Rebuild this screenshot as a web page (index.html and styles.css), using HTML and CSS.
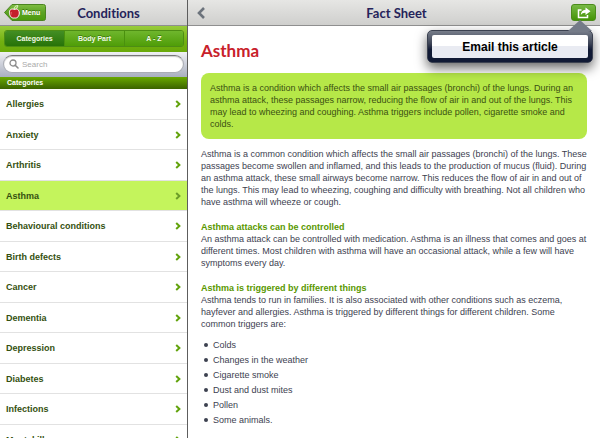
FILE: index.html
```html
<!DOCTYPE html>
<html lang="en">
<head>
    <meta charset="UTF-8">
    <meta name="viewport" content="width=device-width, initial-scale=1.0">
    <title>Conditions</title>
    <link rel="stylesheet" href="styles.css">
</head>
<body>

    <!-- Left column -->
    <aside class="sidebar">
        <header class="bar">
            <button class="menu-button" type="button">
                <svg class="menu-shape" viewBox="0 0 42 17" width="42" height="17" aria-hidden="true">
                    <defs>
                        <linearGradient id="menuFill" x1="0" y1="0" x2="0" y2="1">
                            <stop offset="0" stop-color="#7fbd42"/>
                            <stop offset="0.5" stop-color="#5ca323"/>
                            <stop offset="1" stop-color="#4c9b0c"/>
                        </linearGradient>
                    </defs>
                    <path d="M8 .5H39.500a2 2 0 0 1 2 2v12a2 2 0 0 1-2 2H8L.5 8.500z" fill="url(#menuFill)" stroke="#4b8420"/>
                    <path d="M10.500 5.500c-3.500-1.500-5.500.5-5 4 .5 3.300 2.500 5 5 4.500 3 .5 4.800-2 4.800-5 0-3.500-2.500-4.800-4.800-3.500z" fill="#c4202b" stroke="#fff"/>
                    <path d="M10 5.200c0-2 1-3.500 3.800-3.700 0 2-1.300 3.700-3.800 3.700z" fill="#8fd13f" stroke="#fff" stroke-width=".7"/>
                    <path d="M7.500 8c-.6.800-.5 1.600-.2 2.400" fill="none" stroke="#ef8d92" stroke-width=".8"/>
                </svg>
                <span class="menu-text">Menu</span>
            </button>
            <h2 class="bar-title">Conditions</h2>
        </header>

        <nav class="tabs">
            <div class="tab-group">
                <button class="tab active" type="button">Categories</button>
                <button class="tab" type="button">Body Part</button>
                <button class="tab" type="button">A - Z</button>
            </div>
        </nav>

        <div class="search">
            <label class="search-box">
                <svg viewBox="0 0 10 10" width="10" height="10" aria-hidden="true">
                    <circle cx="4" cy="4" r="3" fill="none" stroke="#8b8b8b" stroke-width="1.300"/>
                    <path d="M6.200 6.200L9 9" stroke="#8b8b8b" stroke-width="1.600" stroke-linecap="round"/>
                </svg>
                <input type="search" placeholder="Search" aria-label="Search">
            </label>
        </div>

        <h3 class="section-title">Categories</h3>
        <ul class="list">
            <li><a href="#">Allergies <svg class="chevron" viewBox="0 0 6 8"><path d="M1.200 1L4.400 4 1.200 7"/></svg></a></li>
            <li><a href="#">Anxiety <svg class="chevron" viewBox="0 0 6 8"><path d="M1.200 1L4.400 4 1.200 7"/></svg></a></li>
            <li><a href="#">Arthritis <svg class="chevron" viewBox="0 0 6 8"><path d="M1.200 1L4.400 4 1.200 7"/></svg></a></li>
            <li class="selected"><a href="#">Asthma <svg class="chevron" viewBox="0 0 6 8"><path d="M1.200 1L4.400 4 1.200 7"/></svg></a></li>
            <li><a href="#">Behavioural conditions <svg class="chevron" viewBox="0 0 6 8"><path d="M1.200 1L4.400 4 1.200 7"/></svg></a></li>
            <li><a href="#">Birth defects <svg class="chevron" viewBox="0 0 6 8"><path d="M1.200 1L4.400 4 1.200 7"/></svg></a></li>
            <li><a href="#">Cancer <svg class="chevron" viewBox="0 0 6 8"><path d="M1.200 1L4.400 4 1.200 7"/></svg></a></li>
            <li><a href="#">Dementia <svg class="chevron" viewBox="0 0 6 8"><path d="M1.200 1L4.400 4 1.200 7"/></svg></a></li>
            <li><a href="#">Depression <svg class="chevron" viewBox="0 0 6 8"><path d="M1.200 1L4.400 4 1.200 7"/></svg></a></li>
            <li><a href="#">Diabetes <svg class="chevron" viewBox="0 0 6 8"><path d="M1.200 1L4.400 4 1.200 7"/></svg></a></li>
            <li><a href="#">Infections <svg class="chevron" viewBox="0 0 6 8"><path d="M1.200 1L4.400 4 1.200 7"/></svg></a></li>
            <li><a href="#">Mental illness <svg class="chevron" viewBox="0 0 6 8"><path d="M1.200 1L4.400 4 1.200 7"/></svg></a></li>
        </ul>
    </aside>

    <!-- Article -->
    <main class="content">
        <header class="bar">
            <button class="back-button" type="button" aria-label="Back">
                <svg viewBox="0 0 8 12" width="8" height="12"><path d="M7 1L2 6l5 5" fill="none" stroke="#6c737c" stroke-width="2.600"/></svg>
            </button>
            <h2 class="bar-title">Fact Sheet</h2>
            <button class="share-button" type="button" aria-label="Share">
                <svg viewBox="0 0 14 12" width="14" height="12">
                    <path d="M4.500 3H1.500v7.500h9V8" fill="none" stroke="#fff" stroke-width="1.500"/>
                    <path d="M8.500.5L13.500 4.200 8.500 8V5.700C6.300 5.600 5 6.200 3.800 8 3.900 4.800 5.500 2.900 8.500 2.700z" fill="#fff"/>
                </svg>
            </button>
        </header>

        <div class="popover">
            <button class="popover-item" type="button">Email this article</button>
        </div>

        <article class="article">
            <h1>Asthma</h1>
            <p class="summary">Asthma is a condition which affects the small air passages (bronchi) of the lungs. During an asthma attack, these passages narrow, reducing the flow of air in and out of the lungs. This may lead to wheezing and coughing. Asthma triggers include pollen, cigarette smoke and colds.</p>
            <p>Asthma is a common condition which affects the small air passages (bronchi) of the lungs. These passages become swollen and inflamed, and this leads to the production of mucus (fluid). During an asthma attack, these small airways become narrow. This reduces the flow of air in and out of the lungs. This may lead to wheezing, coughing and difficulty with breathing. Not all children who have asthma will wheeze or cough.</p>
            <h3>Asthma attacks can be controlled</h3>
            <p>An asthma attack can be controlled with medication. Asthma is an illness that comes and goes at different times. Most children with asthma will have an occasional attack, while a few will have symptoms every day.</p>
            <h3>Asthma is triggered by different things</h3>
            <p>Asthma tends to run in families. It is also associated with other conditions such as eczema, hayfever and allergies. Asthma is triggered by different things for different children. Some common triggers are:</p>
            <ul>
                <li>Colds</li>
                <li>Changes in the weather</li>
                <li>Cigarette smoke</li>
                <li>Dust and dust mites</li>
                <li>Pollen</li>
                <li>Some animals.</li>
            </ul>
        </article>
    </main>

</body>
</html>
```

FILE: styles.css
```css
/* General Styles */
* {
    box-sizing: border-box;
}

body {
    display: flex;
    height: 100vh;
    margin: 0;
    overflow: hidden;
    background: #fff;
    color: #3d4150;
    font-family: "Liberation Sans", Arial, sans-serif;
    font-size: 9px;
}

h1, h2, h3, p, ul {
    margin: 0;
    padding: 0;
}

button {
    padding: 0;
    border: none;
    background: none;
    font-family: inherit;
    cursor: pointer;
}

/* Top bars */
.bar {
    display: grid;
    grid-template-columns: 1fr auto 1fr;
    align-items: center;
    height: 26px;
    padding: 0 4px;
    background: linear-gradient(#e6e6e4, #cfcfcd);
    border-bottom: 1px solid #8f8f8f;
}

.bar-title {
    grid-column: 2;
    color: #25235a;
    font-family: Lato, "Noto Sans", sans-serif;
    font-size: 13px;
    font-weight: bold;
    font-variant-ligatures: none;
    line-height: 16px;
}

/* Left column */
.sidebar {
    flex: 0 0 188px;
    overflow: hidden;
    border-right: 1px solid #5d5d5d;
}

.sidebar .bar {
    grid-template-columns: 42px 1fr 12px;
}

.sidebar .bar-title {
    text-align: center;
}

.menu-button {
    display: grid;
    align-items: center;
}

.menu-shape,
.menu-text {
    grid-area: 1 / 1;
}

.menu-text {
    padding-left: 18px;
    color: #fff;
    font-size: 7px;
    font-weight: bold;
    text-align: left;
    text-shadow: 0 -1px 0 #3e7a10;
}

.tabs {
    padding: 4px 3px 5px 4px;
    background: linear-gradient(#98cc3b, #72b010 60%, #69a90a);
}

.tab-group {
    display: grid;
    grid-template-columns: 1fr 1fr 1fr;
    height: 17px;
    overflow: hidden;
    border: 1px solid #4d8d14;
    border-radius: 3px;
}

.tab {
    background: linear-gradient(#6fb62d, #4f9d08);
    border-left: 1px solid #4a910e;
    color: #f2fae8;
    font-size: 7px;
    font-weight: bold;
    text-shadow: 0 -1px 0 #3d7d10;
}

.tab.active {
    background: linear-gradient(#438e24, #277308);
    border-left: none;
}

/* Search */
.search {
    padding: 3px 3px 4px;
    background: linear-gradient(#eff0f4, #a9afbf);
}

.search-box {
    display: flex;
    align-items: center;
    gap: 3px;
    height: 18px;
    padding: 0 5px;
    background: #fff;
    border: 1px solid #aaadb5;
    border-top-color: #777;
    border-radius: 9px;
    box-shadow: inset 0 1px 1px #ccc;
}

.search-box input {
    flex: 1;
    min-width: 0;
    padding: 0;
    border: none;
    outline: none;
    background: none;
    font-family: inherit;
    font-size: 8px;
}

.search-box input::placeholder {
    color: #aaa;
}

.section-title {
    height: 12px;
    padding-left: 7px;
    background: linear-gradient(#69a900, #3a6200);
    color: #fff;
    font-size: 7px;
    line-height: 12px;
}

/* Category list */
.list {
    display: grid;
    grid-auto-rows: 31px 30px;
    list-style: none;
}

.list li {
    border-bottom: 1px solid #e2e2e2;
}

.list a {
    display: flex;
    align-items: center;
    justify-content: space-between;
    height: 100%;
    padding: 0 6px;
    color: #345010;
    font-size: 9px;
    font-weight: bold;
    text-decoration: none;
}

.list .selected {
    background: #c4f45c;
}

.chevron {
    width: 6px;
    height: 8px;
    fill: none;
    stroke: #62a30c;
    stroke-width: 2;
}

.selected .chevron {
    stroke: #6c9d28;
}

/* Article */
.content {
    position: relative;
    flex: 1;
    min-width: 0;
}

.content .bar {
    padding: 0 4px 0 9px;
}

.back-button {
    justify-self: start;
    height: 12px;
}

.back-button svg {
    display: block;
}

.share-button {
    display: grid;
    place-items: center;
    justify-self: end;
    width: 25px;
    height: 17px;
    background: linear-gradient(#78b945, #439405);
    border: 1px solid #4b8b1b;
    border-radius: 3px;
}

.article {
    padding: 12px 13px;
    font-size: 9px;
    line-height: 12px;
}

.article h1 {
    margin-bottom: 9px;
    color: #c8202a;
    font-family: Lato, "Noto Sans", sans-serif;
    font-size: 17px;
    font-weight: bold;
    line-height: 26px;
}

.article p {
    margin-bottom: 9px;
}

.article .summary {
    padding: 9px;
    background: #b6e848;
    border-radius: 8px;
    color: #3b5112;
}

.article h3 {
    margin-top: 13px;
    color: #599700;
    font-size: 9px;
    line-height: 12px;
}

.article ul {
    padding-left: 3px;
    list-style: none;
}

.article li {
    display: flex;
    align-items: center;
    gap: 5px;
    margin-bottom: 3px;
}

.article li::before {
    content: "";
    width: 4px;
    height: 4px;
    background: #3d4150;
    border-radius: 50%;
}

/* Popover */
.popover {
    position: absolute;
    top: 30px;
    right: 7px;
    width: 166px;
    padding: 4px;
    background: linear-gradient(#777d8a, #3e4557 40%, #111a35 60%);
    border: 1px solid #3b4150;
    border-radius: 5px;
    box-shadow: 0 5px 12px rgba(0, 0, 0, 0.6);
}

.popover::before {
    content: "";
    position: absolute;
    top: -11px;
    right: 0;
    width: 24px;
    height: 11px;
    background: #747b88;
    clip-path: polygon(50% 0, 100% 100%, 0 100%);
}

.popover-item {
    width: 100%;
    height: 23px;
    background: linear-gradient(#fff 50%, #e9ebf2 50%);
    border-radius: 2px;
    color: #000;
    font-size: 12px;
    font-weight: bold;
}
```
